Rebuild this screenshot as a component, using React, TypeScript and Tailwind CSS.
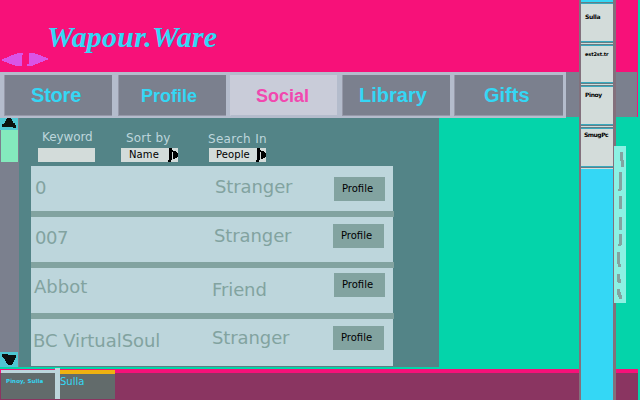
import React from 'react';

const tabs = [
  { label: 'Store', cls: 'w-[108px] mr-[2px] text-[20px] tracking-[-0.2px] pl-[26px] pt-[9px]' },
  { label: 'Profile', cls: 'w-[108px] text-[18px] pl-[22px] pt-[10px]' },
  { label: 'Social', cls: 'w-[107px] mr-px text-[18px] pl-[25px] pt-[10px]', active: true },
  { label: 'Library', cls: 'w-[108px] text-[20px] pl-[16px] pt-[9px]' },
  { label: 'Gifts', cls: 'w-[109px] text-[20px] pl-[29px] pt-[9px]' },
];

const people = [
  { name: '0', row: 'h-[45px]', nameCls: 'pl-[4px] pt-[10px]', status: 'Stranger', statusCls: 'pl-[4px] pt-[9px]', btn: 'ml-[3px] mt-[11px]' },
  { name: '007', row: 'h-[45px]', nameCls: 'pl-[4px] pt-[9px] tracking-[-0.5px]', status: 'Stranger', statusCls: 'pl-[3px] pt-[7px]', btn: 'ml-[2px] mt-[7px]' },
  { name: 'Abbot', row: 'h-[45px]', nameCls: 'pl-[3px] pt-[7px]', status: 'Friend', statusCls: 'pl-[1px] pt-[10px]', btn: 'ml-[3px] mt-[5px]' },
  { name: 'BC VirtualSoul', row: 'h-[47px]', nameCls: 'pl-[2px] pt-[10px] tracking-[-0.05px]', status: 'Stranger', statusCls: 'pl-[1px] pt-[7px]', btn: 'ml-[2px] mt-[7px]' },
];

const friends = [
  { name: 'Sulla', cell: 'h-[37px]', cls: 'pl-[4px] pt-[9px] text-[6px] tracking-[-0.3px]' },
  { name: 'est2st.tr', cell: 'h-[36px]', cls: 'pl-[4px] pt-[4px] text-[5px] tracking-[-0.1px]' },
  { name: 'Pinoy', cell: 'h-[37px]', cls: 'pl-[4px] pt-[4px] text-[6px] tracking-[-0.4px]' },
  { name: 'SmugPc', cell: 'h-[37px]', cls: 'pl-[3px] pt-[2px] text-[6px] tracking-[-0.5px]' },
];

function Select({ value, cls }: { value: string; cls: string }) {
  return (
    <div className={`flex h-[14px] w-[57px] justify-between bg-[#d3dcda] text-[10px] leading-[14px] text-black ${cls}`}>
      <span className="tracking-[0.1px]">{value}</span>
      <svg width="10" height="14" viewBox="0 0 10 14" shapeRendering="crispEdges">
        <path d="M1 0h3v12H3v2H0v-2h1zM4 2h1v1h3v1h1v1h1v4H9v1H7v1H5V4H4z" />
      </svg>
    </div>
  );
}

export default function App() {
  return (
    <div className="relative flex h-[400px] w-[640px] overflow-hidden bg-[#04d4aa] font-['DejaVu_Sans',sans-serif] whitespace-nowrap">
      <div className="flex w-[638px] flex-col">
        <header className="flex h-[72px] shrink-0 bg-[#f71179]">
          <svg className="mt-[53px] ml-[1px] shrink-0" width="48" height="13" viewBox="0 0 48 13" shapeRendering="crispEdges">
            <path fill="#da54e7" d="M1 6.500L14 1L18 0H22V2H20.500V11H21V13H15L8 10.500L1 7.500ZM27.500 0H33L41 3L47 5.500V6.500L38 10L33 12L31 13H26V11H27.500Z" />
          </svg>
          <h1 className="mt-[20px] ml-[-2px] font-['Liberation_Serif',serif] text-[30px] leading-[34px] font-bold tracking-[0.2px] text-[#34d7f5] italic">
            Wapour.Ware
          </h1>
        </header>

        <nav className="flex h-[46px] shrink-0">
          <div className="flex w-[566px] gap-[4px] bg-[#b4bccc] pt-[3px] pl-[4px] font-['Liberation_Sans',sans-serif]">
            {tabs.map((t) => (
              <div
                key={t.label}
                className={`h-[41px] shrink-0 border-b border-l leading-[22px] font-bold ${t.cls} ${
                  t.active ? 'border-[#c9ccd9] border-b-[#b4bccc] bg-[#c9ccd9] text-[#f148af]' : 'border-[#9699a9] bg-[#7b808e] text-[#34d7f5]'
                }`}
              >
                {t.label}
              </div>
            ))}
          </div>
          <div className="h-[45px] w-[71px] bg-[#7b808e]" />
          <div className="h-[45px] w-px bg-[#f71179]" />
        </nav>

        <main className="flex h-[249px] shrink-0">
          <div className="flex w-[19px] flex-col bg-[#7b808e]">
            <svg width="18" height="12" viewBox="0 0 18 12" shapeRendering="crispEdges">
              <path fill="#4fc7d3" d="M0 0h18v12H0z" />
              <path fill="#0c1110" d="M7 0h4v1h1v2h1v2h2v2h1v3h-3V9H2V6h2V5h1V3h1V1h1z" />
            </svg>
            <div className="ml-px h-[32px] w-[17px] bg-[#84eabd]" />
            <svg className="mt-auto" width="18" height="15" viewBox="0 0 18 15" shapeRendering="crispEdges">
              <path fill="#4fc7d3" d="M0 0h18v15H0z" />
              <path fill="#0c1110" d="M2 2h6v1h8v3h-1v2h-1v2h-1v2h-1v1H8v-1H7v-1H6V9H5V7H4V6H3V5H2z" />
            </svg>
          </div>

          <section className="w-[420px] bg-[#538487]">
            <div className="flex h-[48px] text-[12px] leading-[14px] text-[#bdd6dc]">
              <div className="w-[83px] pt-[12px] pl-[19px]">
                <div className="pl-[4px] tracking-[-0.1px]">Keyword</div>
                <div className="mt-[4px] h-[14px] w-[57px] bg-[#d3dcda]" />
              </div>
              <div className="w-[88px] pt-[13px] pl-[19px]">
                <div className="pl-[5px] tracking-[0.2px]">Sort by</div>
                <Select value="Name" cls="mt-[3px] pl-[8px]" />
              </div>
              <div className="pt-[14px] pl-[19px]">
                <div className="-ml-px tracking-[0.3px]">Search In</div>
                <Select value="People" cls="mt-[2px] pl-[7px]" />
              </div>
            </div>
            <div className="ml-[12px] flex h-[200px] w-[363px] flex-col gap-[6px] bg-[#82a3a0]">
              {people.map((p) => (
                <div
                  key={p.name}
                  className={`flex w-full shrink-0 border-r border-[#538487] bg-[#bdd6dc] text-[18px] leading-[24px] text-[#82a3a0] ${p.row}`}
                >
                  <div className={`w-[180px] ${p.nameCls}`}>{p.name}</div>
                  <div className={`w-[120px] tracking-[-0.1px] ${p.statusCls}`}>{p.status}</div>
                  <div className={`h-[24px] w-[51px] bg-[#82a3a0] pl-[8px] text-[10px] leading-[23px] text-black ${p.btn}`}>Profile</div>
                </div>
              ))}
            </div>
          </section>
        </main>

        <footer className="mt-[2px] flex h-[31px] shrink-0 border-t-[4px] border-[#f71179] bg-[#8a3561]">
          <div className="-mt-[3px] ml-px h-[29px] w-[54px] border-t-[3px] border-[#bdd6dc] bg-[#626b6b] pt-[4px] pl-[5px] text-[5.5px] leading-[8px] font-bold tracking-[0.1px] text-[#34d7f5]">
            Pinoy, Sulla
          </div>
          <div className="-mt-[5px] h-[31px] w-[5px] bg-[#bdd6dc]" />
          <div className="-mt-[3px] h-[29px] w-[55px] border-t-[4px] border-[#eeb111] bg-[#626b6b] pt-[1px] text-[10px] leading-[13px] text-[#34d7f5]">
            Sulla
          </div>
        </footer>
      </div>

      <aside className="absolute top-0 left-[579px] flex h-full w-[37px] flex-col border-r-[3px] border-l-2 border-[#83707c] bg-[#34d7f5] pt-[2px]">
        {friends.map((f) => (
          <div key={f.name} className="w-[32px] border-t border-[#637e87]">
            <div className="h-px bg-[#38a9be]" />
            <div className={`bg-[#d3dcda] leading-[8px] font-bold text-black ${f.cell} ${f.cls}`}>{f.name}</div>
            <div className="h-px bg-[#38a9be]" />
            <div className="h-px bg-[#637e87]" />
            <div className="h-px bg-[#d3dcda]" />
          </div>
        ))}
      </aside>

      <svg className="absolute top-[146px] left-[614px]" width="12" height="157" viewBox="0 0 12 157" shapeRendering="crispEdges">
        <path fill="#8cf1e3" d="M0 0h12v157H0z" />
        <path
          fill="#82a3a0"
          d="M6 6h3v8h1v7H7v-6H6zM5 26h3v18H7v1H4v-2h1zM5 50h3v13H5zM5 71h3v13H5zM5 88h3v11H7v1H4v-2h1zM3 106h3v12h1v3H4v-3H3zM3 128h3v5h1v4H4v-1H3zM3 143h3v3h1v3h1v4H5v-2H4v-2H3z"
        />
      </svg>
    </div>
  );
}
